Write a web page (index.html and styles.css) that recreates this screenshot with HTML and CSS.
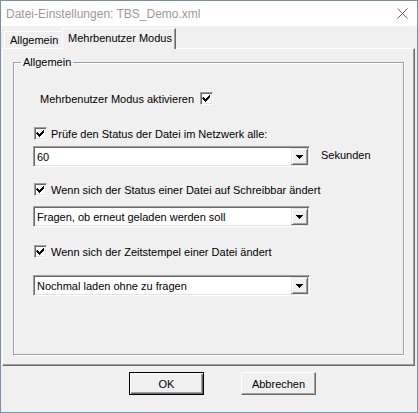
FILE: index.html
```html
<!DOCTYPE html>
<html>
<head>
    <title>Datei-Einstellungen: TBS_Demo.xml</title>
    <link rel="stylesheet" href="styles.css">
</head>
<body>
    <div class="dialog">
        <div class="titlebar">
            <span class="title">Datei-Einstellungen: TBS_Demo.xml</span>
            <svg class="close" width="11" height="11" viewBox="0 0 11 11">
                <path d="M0.5 0.5 L10.5 10.5 M10.5 0.5 L0.5 10.5" stroke="#6d6d6d" stroke-width="1" fill="none"/>
            </svg>
        </div>
        <div class="client">
            <div class="tabs">
                <div class="tab">Allgemein</div>
                <div class="tab active">Mehrbenutzer Modus</div>
            </div>
            <div class="panel">
                <fieldset class="group">
                    <legend>Allgemein</legend>

                    <div class="row row-main">
                        <span>Mehrbenutzer Modus aktivieren</span>
                        <span class="check on"></span>
                    </div>

                    <div class="row row-opt row-2">
                        <span class="check on"></span>
                        <span>Prüfe den Status der Datei im Netzwerk alle:</span>
                    </div>
                    <div class="combo-line combo-1">
                        <div class="combo">
                            <span class="combo-text">60</span>
                            <span class="combo-btn"></span>
                        </div>
                        <span class="unit">Sekunden</span>
                    </div>

                    <div class="row row-opt row-3">
                        <span class="check on"></span>
                        <span>Wenn sich der Status einer Datei auf Schreibbar ändert</span>
                    </div>
                    <div class="combo-line combo-2">
                        <div class="combo">
                            <span class="combo-text">Fragen, ob erneut geladen werden soll</span>
                            <span class="combo-btn"></span>
                        </div>
                    </div>

                    <div class="row row-opt row-4">
                        <span class="check on"></span>
                        <span>Wenn sich der Zeitstempel einer Datei ändert</span>
                    </div>
                    <div class="combo-line combo-3">
                        <div class="combo">
                            <span class="combo-text">Nochmal laden ohne zu fragen</span>
                            <span class="combo-btn"></span>
                        </div>
                    </div>
                </fieldset>
            </div>
            <div class="buttons">
                <button class="btn default">OK</button>
                <button class="btn">Abbrechen</button>
            </div>
        </div>
    </div>
</body>
</html>
```

FILE: styles.css
```css
body {
    margin: 0;
    font-family: "Liberation Sans", Arial, sans-serif;
    font-size: 11px;
    color: #000;
    background-color: #f0f0f0;
}
.dialog {
    width: 418px;
    height: 413px;
    box-sizing: border-box;
    border: 1px solid #7991ab;
    display: flex;
    flex-direction: column;
    background-color: #f0f0f0;
}
.titlebar {
    height: 25px;
    flex: none;
    background-color: #fff;
    display: flex;
    align-items: center;
    justify-content: space-between;
    padding: 0 9px 0 5px;
}
.title {
    font-size: 12px;
    color: #9a9a9a;
}
.close {
    display: block;
    margin-top: -1px;
}
.client {
    flex: 1;
    padding: 2px 2px 0 1px;
}

/* tabs */
.tabs {
    display: flex;
    align-items: flex-end;
    height: 20px;
    padding-left: 2px;
    position: relative;
    z-index: 1;
}
.tab {
    width: 60px;
    height: 17px;
    line-height: 17px;
    padding: 0 0 0 5px;
    box-sizing: border-box;
    white-space: nowrap;
    overflow: hidden;
    border-top: 1px solid #fff;
    border-left: 1px solid #fff;
    border-right: 1px solid #696969;
    box-shadow: inset -1px 0 #a0a0a0;
    background-color: #f0f0f0;
}
.tab.active {
    width: 114px;
    height: 21px;
    line-height: 18px;
    margin-left: -2px;
    margin-bottom: -1px;
    padding-left: 5px;
}

/* panel */
.panel {
    height: 318px;
    box-sizing: border-box;
    border-top: 1px solid #fff;
    border-left: 1px solid #fff;
    border-right: 1px solid #696969;
    border-bottom: 1px solid #696969;
    box-shadow: inset -1px -1px #a0a0a0;
    padding: 7px 10px 11px 10px;
}
.group {
    margin: 0;
    padding: 0;
    height: 299px;
    box-sizing: border-box;
    border: 1px solid #a0a0a0;
    box-shadow: inset 1px 1px #fff, 1px 1px #fff;
}
.group legend {
    margin-left: 7px;
    padding: 0 2px;
    line-height: 13px;
}

/* rows */
.row {
    display: flex;
    align-items: center;
    height: 13px;
}
.row-main {
    margin-top: 23px;
    padding-left: 26px;
    gap: 6px;
}
.row-opt {
    padding-left: 20px;
    gap: 4px;
}
.row-2 {
    margin-top: 22px;
}
.row-3 {
    margin-top: 16px;
}
.row-4 {
    margin-top: 18px;
}

.check {
    width: 13px;
    height: 13px;
    box-sizing: border-box;
    flex: none;
    border: 1px solid;
    border-color: #a0a0a0 #fff #fff #a0a0a0;
    box-shadow: inset 1px 1px #696969, inset -1px -1px #e3e3e3;
    background-color: #fff;
}
.check.on {
    background-image: url("data:image/svg+xml,%3Csvg xmlns='http://www.w3.org/2000/svg' width='11' height='11'%3E%3Cpath d='M2 4h1v1h1v1h1v-1h1v-1h1v-1h1v-1h1v3h-1v1h-1v1h-1v1h-1v1h-1v-1h-1v-1h-1v-1h-1z' fill='%23000'/%3E%3C/svg%3E");
    background-repeat: no-repeat;
    background-position: 0 0;
}

/* combos */
.combo-line {
    display: flex;
    align-items: center;
    padding-left: 19px;
    gap: 11px;
}
.combo-1 {
    margin-top: 6px;
}
.combo-2 {
    margin-top: 10px;
}
.combo-3 {
    margin-top: 17px;
}
.combo {
    width: 277px;
    height: 21px;
    box-sizing: border-box;
    display: flex;
    align-items: center;
    border: 1px solid;
    border-color: #a0a0a0 #fff #fff #a0a0a0;
    box-shadow: inset 1px 1px #696969, inset -1px -1px #e3e3e3;
    background-color: #fff;
    padding: 1px;
}
.combo-text {
    flex: 1;
    padding-left: 2px;
}
.combo-btn {
    width: 17px;
    height: 17px;
    box-sizing: border-box;
    flex: none;
    border: 1px solid;
    border-color: #e3e3e3 #696969 #696969 #e3e3e3;
    box-shadow: inset 1px 1px #fff, inset -1px -1px #a0a0a0;
    background-color: #f0f0f0;
    background-image: url("data:image/svg+xml,%3Csvg xmlns='http://www.w3.org/2000/svg' width='7' height='4'%3E%3Cpath d='M0 0h7v1h-1v1h-1v1h-1v1h-1v-1h-1v-1h-1v-1h-1z' fill='%23000'/%3E%3C/svg%3E");
    background-repeat: no-repeat;
    background-position: 4px 6px;
}
.unit {
    margin-top: -4px;
}

/* buttons */
.buttons {
    display: flex;
    gap: 37px;
    padding: 6px 0 0 127px;
}
.btn {
    width: 75px;
    height: 23px;
    box-sizing: border-box;
    font-family: "Liberation Sans", Arial, sans-serif;
    font-size: 11px;
    color: #000;
    background-color: #f0f0f0;
    border: 1px solid;
    border-color: #fff #696969 #696969 #fff;
    box-shadow: inset -1px -1px #a0a0a0;
    padding: 0;
}
.btn.default {
    border: 1px solid #000;
    box-shadow: inset 1px 1px #fff, inset -1px -1px #696969, inset -2px -2px #a0a0a0;
}
```
